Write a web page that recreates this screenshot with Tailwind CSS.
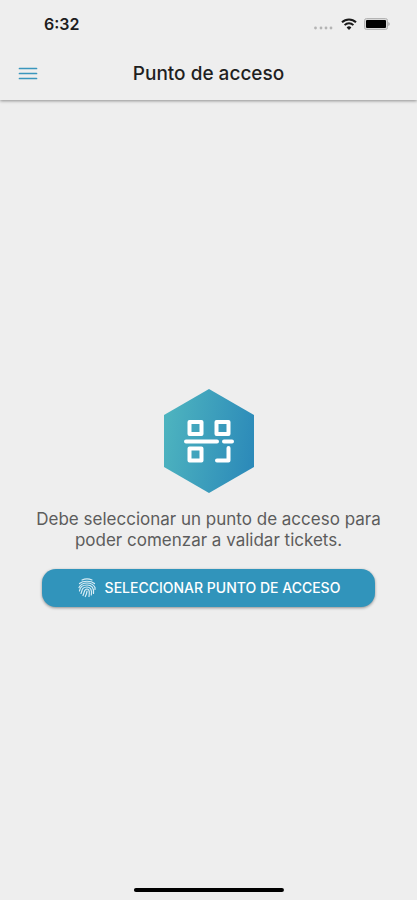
<!DOCTYPE html>
<html lang="es">
<head>
  <meta charset="UTF-8" />
  <meta name="viewport" content="width=device-width, initial-scale=1.0"/>
  <title>Punto de acceso</title>
  <script src="https://cdn.jsdelivr.net/npm/@tailwindcss/browser@4"></script>
  <style>
    body { font-family: 'Inter', 'Liberation Sans', sans-serif; }
  </style>
</head>
<body class="bg-[#eeeeee] min-h-screen flex flex-col">
  <header class="shadow-[0_1px_3px_rgba(0,0,0,0.4)]">
    <!-- Barra de estado -->
    <div class="h-12 pl-11 pr-6 flex items-center justify-between">
      <span class="text-base font-semibold text-[#1c1c1c]">6:32</span>
      <div class="flex items-center gap-1">
        <svg class="w-6 h-4" viewBox="0 0 24 16" fill="#b4b4b4">
          <circle cx="2.500" cy="12" r="1.400"/>
          <circle cx="8" cy="12" r="1.400"/>
          <circle cx="13" cy="12" r="1.400"/>
          <circle cx="18" cy="12" r="1.400"/>
        </svg>
        <svg class="w-4 h-3" viewBox="0 0 16 12" fill="none" stroke="#1a1a1a" stroke-width="2">
          <path d="M1 4.300a10 10 0 0 1 14 0"/>
          <path d="M3.600 7.100a6.300 6.300 0 0 1 8.800 0"/>
          <path d="M8 12 5.600 9.400a3.500 3.500 0 0 1 4.800 0z" fill="#1a1a1a" stroke="none"/>
        </svg>
        <svg class="w-8 h-3" viewBox="0 0 32 12">
          <rect x="3.500" y="0.500" width="23" height="11" rx="2" fill="#d8d8d8" stroke="#b4b4b4"/>
          <rect x="5" y="2" width="20" height="8" rx="1" fill="#000"/>
          <path d="M27.500 4v4c1.400-.6 1.400-3.400 0-4z" fill="#8a8a8a"/>
        </svg>
      </div>
    </div>

    <!-- Título -->
    <div class="h-[52px] px-[18px] grid grid-cols-[20px_1fr_20px] items-center">
      <button type="button" aria-label="Menú">
        <svg class="w-5 h-4" viewBox="0 0 20 16" stroke="#3a96bd" stroke-width="1.700" stroke-linecap="round">
          <path d="M1.500 2.500h17M1.500 7.500h17M1.500 12.500h17"/>
        </svg>
      </button>
      <h1 class="text-[19px] font-medium text-center text-[#1f1f1f]">Punto de acceso</h1>
    </div>
  </header>

  <!-- Contenido -->
  <main class="flex-1 flex flex-col items-center justify-center px-4 pb-1">
    <svg class="w-[90px] h-[104px]" viewBox="0 0 90 104" fill="none">
      <defs>
        <linearGradient id="hex" x1="0" y1="0.400" x2="1" y2="0.600">
          <stop offset="0" stop-color="#4db3bf"/>
          <stop offset="1" stop-color="#2c8ab9"/>
        </linearGradient>
      </defs>
      <path d="M45 0 90 26v52l-45 26L0 78V26z" fill="url(#hex)"/>
      <g stroke="#fff" stroke-width="4" stroke-linejoin="round" stroke-linecap="round">
        <rect x="25.500" y="33" width="12" height="12"/>
        <rect x="52.500" y="33" width="12" height="12"/>
        <rect x="25.500" y="59.500" width="12" height="12"/>
        <path d="M64.500 59v12.500H53"/>
        <path d="M22 52.500h31M60 52.500h8"/>
      </g>
    </svg>

    <p class="mt-4 text-[17px] leading-[21px] text-center text-[#5c5c5c]">Debe seleccionar un punto de acceso para poder comenzar a validar tickets.</p>

    <div class="mt-[18px] w-full px-[26px]">
      <button type="button" class="w-full h-[38px] rounded-[14px] bg-[#3194bb] text-white text-sm font-medium flex items-center justify-center gap-2 shadow-[0_1px_3px_rgba(0,0,0,0.4)]">
        <svg class="w-5 h-5" viewBox="0 0 20 20" fill="none" stroke="#d9edf5" stroke-width="1.200" stroke-linecap="round">
          <path d="M5 2c3-1.300 7-1.300 10 0"/>
          <path d="M2.500 5.500C6 2.500 14 2.500 17.500 5.500"/>
          <path d="M2 9.500c3-6 13-6 16 0v2"/>
          <path d="M2.500 13c.3-2 .5-6 7.500-6 5 0 7 3 6.500 8.500"/>
          <path d="M4 15.500c1.300-3 .5-6.500 6-6.500 4 0 5 3.500 4.300 8"/>
          <path d="M6 17.500c1.800-3.500.8-6.500 4-6.500 2.800 0 2.500 4 2 7.500"/>
          <path d="M8.300 18.500c1.500-2.500 1.500-3.500 1.700-5.500"/>
        </svg>
        <span>SELECCIONAR PUNTO DE ACCESO</span>
      </button>
    </div>
  </main>

  <!-- Indicador de inicio -->
  <div class="fixed bottom-2 left-1/2 -translate-x-1/2 w-9/25 h-1 rounded-full bg-black"></div>
</body>
</html>
